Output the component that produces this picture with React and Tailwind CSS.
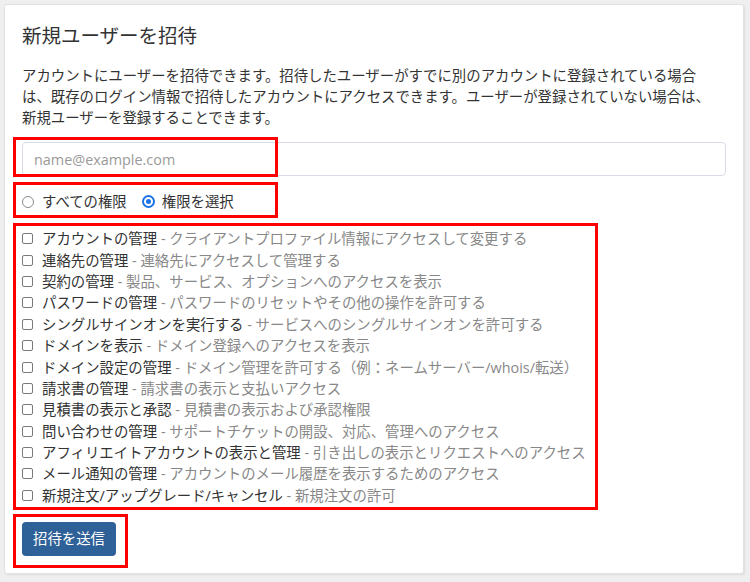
const permissions = [
  ["アカウントの管理", "クライアントプロファイル情報にアクセスして変更する"],
  ["連絡先の管理", "連絡先にアクセスして管理する"],
  ["契約の管理", "製品、サービス、オプションへのアクセスを表示"],
  ["パスワードの管理", "パスワードのリセットやその他の操作を許可する"],
  ["シングルサインオンを実行する", "サービスへのシングルサインオンを許可する"],
  ["ドメインを表示", "ドメイン登録へのアクセスを表示"],
  ["ドメイン設定の管理", "ドメイン管理を許可する（例：ネームサーバー/whois/転送）"],
  ["請求書の管理", "請求書の表示と支払いアクセス"],
  ["見積書の表示と承認", "見積書の表示および承認権限"],
  ["問い合わせの管理", "サポートチケットの開設、対応、管理へのアクセス"],
  ["アフィリエイトアカウントの表示と管理", "引き出しの表示とリクエストへのアクセス"],
  ["メール通知の管理", "アカウントのメール履歴を表示するためのアクセス"],
  ["新規注文/アップグレード/キャンセル", "新規注文の許可"],
];

const App = () => {
  return (
    <div
      className="relative w-[750px] h-[582px] bg-[#efefef] p-[4px] pr-[6px] text-[#333] text-[14.4px]"
      style={{ fontFamily: '"Open Sans", "Noto Sans CJK JP", sans-serif' }}
    >
      <div className="h-[570px] bg-white border border-[#e2e2e2] rounded-[3px] shadow-[1px_1px_2px_rgba(0,0,0,0.08)] pt-[17px] pl-[17px] pr-[17px]">
        <h2 className="text-[19.5px] leading-[27px] font-normal text-[#333]">新規ユーザーを招待</h2>

        <p className="mt-[16px] leading-[21px] whitespace-nowrap">
          アカウントにユーザーを招待できます。招待したユーザーがすでに別のアカウントに登録されている場合
          <br />
          は、既存のログイン情報で招待したアカウントにアクセスできます。ユーザーが登録されていない場合は、
          <br />
          新規ユーザーを登録することできます。
        </p>

        {/* Email */}
        <input
          type="email"
          placeholder="name@example.com"
          className="mt-[14px] block w-full h-[34px] px-[11px] border border-[#d8dce6] rounded-[4px] text-[14.4px] placeholder:text-[#9a9a9a] outline-none"
        />

        {/* Permission mode */}
        <div className="mt-[15px] flex items-center h-[21px] leading-[21px]">
          <label className="flex items-center">
            <span className="w-[12px] h-[12px] rounded-full border border-[#8a8a8a] mr-[8px]" />
            すべての権限
          </label>
          <label className="flex items-center ml-[15px]">
            <span className="w-[13px] h-[13px] rounded-full border-[2px] border-[#1a73e8] bg-white flex items-center justify-center mr-[7px]">
              <span className="w-[5px] h-[5px] rounded-full bg-[#1a73e8]" />
            </span>
            権限を選択
          </label>
        </div>

        {/* Permissions */}
        <div className="mt-[16px] flex flex-col">
          {permissions.map(([name, desc]) => (
            <label key={name} className="flex items-center h-[21.4px] leading-[21px] whitespace-nowrap">
              <span className="w-[11px] h-[11px] border border-[#7a7a7a] rounded-[2px] mr-[9px] shrink-0" />
              <span className="text-[#333]">{name}</span>
              <span className="text-[#888]">&nbsp;-&nbsp;{desc}</span>
            </label>
          ))}
        </div>

        <button
          type="button"
          className="mt-[16px] h-[34px] px-[11px] bg-[#2e6197] text-white rounded-[4px] text-[14.4px] leading-[34px]"
        >
          招待を送信
        </button>
      </div>

      {/* red annotation boxes */}
      <div className="absolute left-[13px] top-[137px] w-[265px] h-[40px] border-[3px] border-[#ff0000] pointer-events-none" />
      <div className="absolute left-[13px] top-[182px] w-[265px] h-[36px] border-[3px] border-[#ff0000] pointer-events-none" />
      <div className="absolute left-[13px] top-[223px] w-[585px] h-[287px] border-[3px] border-[#ff0000] pointer-events-none" />
      <div className="absolute left-[13px] top-[514px] w-[115px] h-[54px] border-[3px] border-[#ff0000] pointer-events-none" />
    </div>
  );
};

export default App;
